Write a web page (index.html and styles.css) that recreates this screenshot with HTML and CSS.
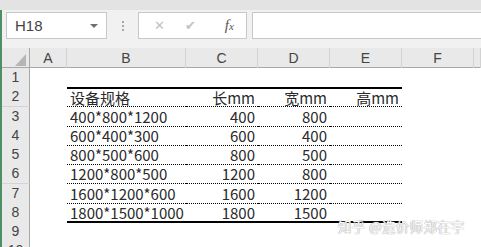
FILE: index.html
```html
<!DOCTYPE html>
<html lang="zh-CN">
<head>
    <meta charset="UTF-8">
    <meta name="viewport" content="width=device-width, initial-scale=1.0">
    <title>设备规格</title>
    <link rel="stylesheet" href="styles.css">
</head>
<body>

    <!-- 功能区底边 -->
    <div class="ribbon-edge"></div>

    <div class="app">
        <!-- 编辑栏 -->
        <div class="formula-bar">
            <div class="name-box">
                <span>H18</span>
                <span class="drop"></span>
            </div>
            <div class="grip"></div>
            <div class="fx-buttons">
                <span class="btn-cancel">&#x2715;</span>
                <span class="btn-ok">&#x2714;</span>
                <span class="btn-fx"><i>f</i><i class="x">x</i></span>
            </div>
            <div class="formula-input"></div>
        </div>

        <!-- 工作表 -->
        <div class="sheet">
            <div class="row head">
                <div class="corner"><span class="tri"></span></div>
                <div class="col">A</div>
                <div class="col">B</div>
                <div class="col">C</div>
                <div class="col">D</div>
                <div class="col">E</div>
                <div class="col">F</div>
                <div class="col"></div>
            </div>

            <div class="row">
                <div class="num">1</div>
                <div class="cell"></div><div class="cell"></div><div class="cell"></div><div class="cell"></div><div class="cell"></div><div class="cell"></div><div class="cell"></div>
            </div>
            <div class="row">
                <div class="num">2</div>
                <div class="cell"></div>
                <div class="cell top dot">设备规格</div>
                <div class="cell top dot r">长mm</div>
                <div class="cell top dot r">宽mm</div>
                <div class="cell top dot r">高mm</div>
                <div class="cell"></div><div class="cell"></div>
            </div>
            <div class="row">
                <div class="num">3</div>
                <div class="cell"></div>
                <div class="cell dot">400*800*1200</div>
                <div class="cell dot r">400</div>
                <div class="cell dot r">800</div>
                <div class="cell dot r"></div>
                <div class="cell"></div><div class="cell"></div>
            </div>
            <div class="row">
                <div class="num">4</div>
                <div class="cell"></div>
                <div class="cell dot">600*400*300</div>
                <div class="cell dot r">600</div>
                <div class="cell dot r">400</div>
                <div class="cell dot r"></div>
                <div class="cell"></div><div class="cell"></div>
            </div>
            <div class="row">
                <div class="num">5</div>
                <div class="cell"></div>
                <div class="cell dot">800*500*600</div>
                <div class="cell dot r">800</div>
                <div class="cell dot r">500</div>
                <div class="cell dot r"></div>
                <div class="cell"></div><div class="cell"></div>
            </div>
            <div class="row">
                <div class="num">6</div>
                <div class="cell"></div>
                <div class="cell dot">1200*800*500</div>
                <div class="cell dot r">1200</div>
                <div class="cell dot r">800</div>
                <div class="cell dot r"></div>
                <div class="cell"></div><div class="cell"></div>
            </div>
            <div class="row">
                <div class="num">7</div>
                <div class="cell"></div>
                <div class="cell dot">1600*1200*600</div>
                <div class="cell dot r">1600</div>
                <div class="cell dot r">1200</div>
                <div class="cell dot r"></div>
                <div class="cell"></div><div class="cell"></div>
            </div>
            <div class="row">
                <div class="num">8</div>
                <div class="cell"></div>
                <div class="cell bottom">1800*1500*1000</div>
                <div class="cell bottom r">1800</div>
                <div class="cell bottom r">1500</div>
                <div class="cell bottom r"></div>
                <div class="cell"></div><div class="cell"></div>
            </div>
            <div class="row">
                <div class="num">9</div>
                <div class="cell"></div><div class="cell"></div><div class="cell"></div><div class="cell"></div><div class="cell"></div><div class="cell"></div><div class="cell"></div>
            </div>
            <div class="row">
                <div class="num">10</div>
                <div class="cell"></div><div class="cell"></div><div class="cell"></div><div class="cell"></div><div class="cell"></div><div class="cell"></div><div class="cell"></div>
            </div>
        </div>
    </div>

    <!-- 水印 -->
    <div class="watermark">知乎 @造价师郑在宇</div>

</body>
</html>
```

FILE: styles.css
```css
body {
    margin: 0;
    padding: 0;
    width: 481px;
    height: 247px;
    overflow: hidden;
    background-color: #fff;
    font-family: "Liberation Sans", Arial, sans-serif;
    position: relative;
}

.ribbon-edge {
    height: 10px;
    background-color: #e3e3e3;
}

.app {
    border-left: 2px solid #4f8f66;
}

/* 编辑栏 */
.formula-bar {
    display: flex;
    align-items: flex-start;
    height: 36px;
    padding: 2px 0 0 4px;
    background-color: #f1f1f1;
}

.name-box {
    box-sizing: border-box;
    width: 101px;
    height: 27px;
    background-color: #fff;
    border: 1px solid #c8c8c8;
    display: flex;
    align-items: center;
    justify-content: space-between;
    padding: 0 8px 0 8px;
    font-size: 15px;
    color: #444;
}

.name-box .drop {
    width: 0;
    height: 0;
    border-left: 4px solid transparent;
    border-right: 4px solid transparent;
    border-top: 4px solid #707070;
}

.grip {
    width: 0;
    height: 10px;
    margin: 9px 0 0 15px;
    border-left: 2px dotted #a8a8a8;
}

.fx-buttons {
    box-sizing: border-box;
    width: 109px;
    height: 27px;
    margin-left: 14px;
    background-color: #fff;
    border: 1px solid #c8c8c8;
    display: flex;
    align-items: center;
    color: #c2c2c2;
}

.btn-cancel {
    font-size: 13px;
    margin-left: 15px;
    font-family: "DejaVu Sans", sans-serif;
}

.btn-ok {
    font-size: 13px;
    margin-left: 20px;
    font-family: "DejaVu Sans", sans-serif;
}

.btn-fx {
    margin-left: 29px;
    color: #555;
    font-family: "Liberation Serif", serif;
    font-size: 15px;
}

.btn-fx .x {
    font-size: 11px;
}

.formula-input {
    flex: 1;
    box-sizing: border-box;
    height: 27px;
    margin-left: 5px;
    background-color: #fff;
    border: 1px solid #c8c8c8;
    border-right: none;
}

/* 工作表 */
.sheet {
    display: flex;
    flex-direction: column;
}

.row {
    display: grid;
    grid-template-columns: 28px 37px 119px 72px 72px 72px 72px 1fr;
    height: 19.25px;
}

.row.head {
    height: 20px;
    background-color: #e9e9e9;
    border-bottom: 1px solid #a8a8a8;
    box-sizing: border-box;
}

.corner {
    display: flex;
    justify-content: flex-end;
    align-items: flex-end;
    padding: 0 3px 2px 0;
    border-right: 1px solid #a8a8a8;
}

.corner .tri {
    width: 11px;
    height: 12px;
    background-color: #b6b6b6;
    clip-path: polygon(100% 0, 100% 100%, 0 100%);
}

.col {
    border-right: 1px solid #d2d2d2;
    text-align: center;
    font-size: 14px;
    line-height: 20px;
    color: #444;
}

.num {
    box-sizing: border-box;
    background-color: #e9e9e9;
    border-right: 1px solid #a8a8a8;
    border-bottom: 1px solid #d4d4d4;
    text-align: center;
    font-size: 14px;
    line-height: 19px;
    color: #444;
}

.cell {
    box-sizing: border-box;
    padding: 1px 3px 0 3px;
    font-family: "Noto Sans CJK SC", "Liberation Sans", sans-serif;
    font-size: 15px;
    line-height: 18px;
    color: #2a2a2a;
    white-space: nowrap;
    overflow: hidden;
}

.cell.r {
    text-align: right;
}

.cell.top {
    border-top: 2px solid #000;
    padding-top: 0;
    line-height: 17px;
}

.cell.dot {
    border-bottom: 1px dotted #000;
}

.cell.bottom {
    border-bottom: 2px solid #000;
}

.watermark {
    position: absolute;
    left: 338px;
    top: 216px;
    font-family: "Noto Sans CJK SC", sans-serif;
    font-size: 13.5px;
    color: #fafafa;
    text-shadow: 0 0 1px #9a9a9a, 0 0 1px #b0b0b0;
    letter-spacing: 0.3px;
}
```
